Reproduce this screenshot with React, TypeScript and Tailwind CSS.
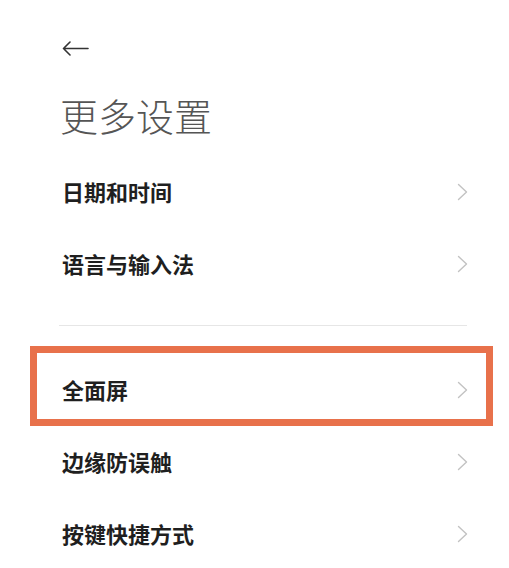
import React from 'react';

const font = { fontFamily: '"Noto Sans CJK SC", "Noto Sans", sans-serif' };

function Chevron() {
  return (
    <svg width="11" height="18" viewBox="0 0 11 18" fill="none" className="shrink-0">
      <polyline points="1.5,1.5 9.5,9 1.5,16.5" stroke="#c2c2c2" strokeWidth="1.4" strokeLinecap="round" strokeLinejoin="round" />
    </svg>
  );
}

function Row({ label, highlight }: { label: string; highlight?: boolean }) {
  return (
    <div className="relative flex h-[72px] items-center justify-between pl-[62px] pr-[41px]">
      {highlight && (
        <div className="pointer-events-none absolute left-[30px] right-[16px] top-[-8px] bottom-0 border-[7px] border-[#e8714b]" />
      )}
      <span className="-mt-[2px] text-[22px] font-bold leading-none text-[#1f1f1f]">{label}</span>
      <Chevron />
    </div>
  );
}

export default function App() {
  return (
    <div className="h-[568px] w-[509px] overflow-hidden bg-white" style={font}>
      <div className="pl-[62px] pt-[41px]">
        <svg width="27" height="15" viewBox="0 0 27 15" fill="none">
          <path d="M26 7.5H1.5M8 1L1.5 7.5L8 14" stroke="#333" strokeWidth="1.6" strokeLinecap="round" strokeLinejoin="round" />
        </svg>
      </div>
      <h1 className="mt-[40px] pl-[60px] text-[38px] font-light leading-[38px] text-[#555]">更多设置</h1>
      <div className="mt-[22px]">
        <Row label="日期和时间" />
        <Row label="语言与输入法" />
        <div className="mb-[28px] ml-[59px] mr-[42px] mt-[25px] h-px bg-[#e6e6e6]" />
        <Row label="全面屏" highlight />
        <Row label="边缘防误触" />
        <Row label="按键快捷方式" />
      </div>
    </div>
  );
}
